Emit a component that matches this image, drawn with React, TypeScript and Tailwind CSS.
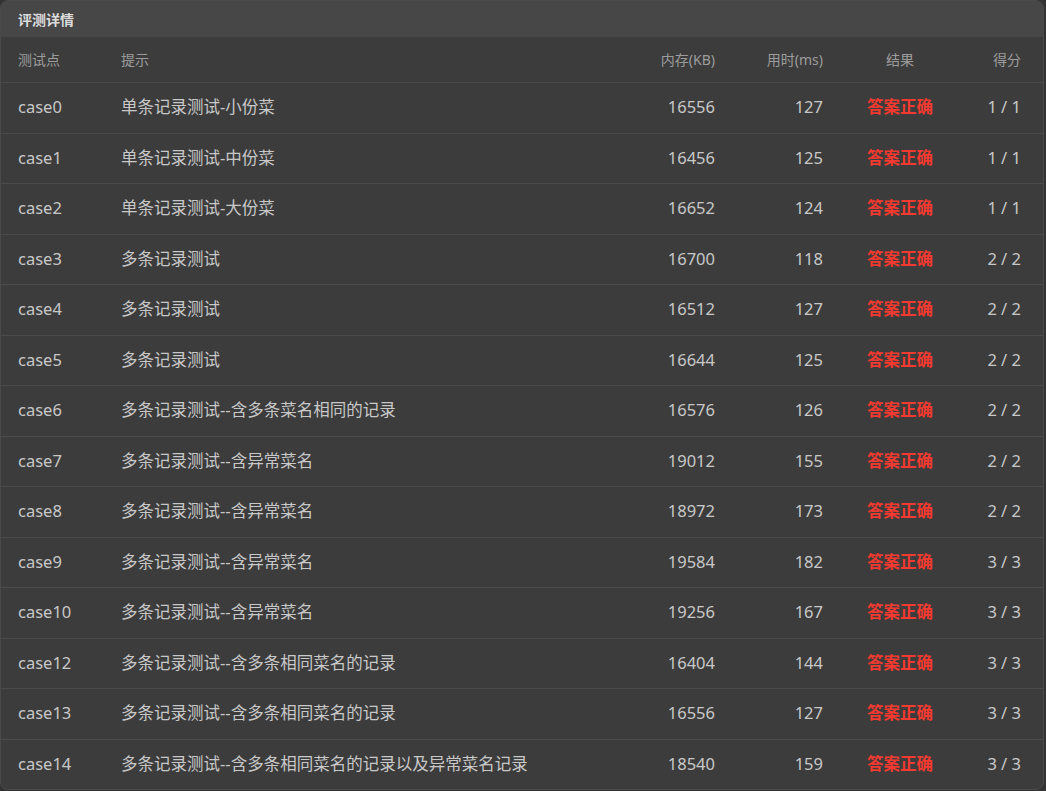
const rows = [
  { id: "case0", hint: "单条记录测试-小份菜", mem: 16556, time: 127, score: "1 / 1" },
  { id: "case1", hint: "单条记录测试-中份菜", mem: 16456, time: 125, score: "1 / 1" },
  { id: "case2", hint: "单条记录测试-大份菜", mem: 16652, time: 124, score: "1 / 1" },
  { id: "case3", hint: "多条记录测试", mem: 16700, time: 118, score: "2 / 2" },
  { id: "case4", hint: "多条记录测试", mem: 16512, time: 127, score: "2 / 2" },
  { id: "case5", hint: "多条记录测试", mem: 16644, time: 125, score: "2 / 2" },
  { id: "case6", hint: "多条记录测试--含多条菜名相同的记录", mem: 16576, time: 126, score: "2 / 2" },
  { id: "case7", hint: "多条记录测试--含异常菜名", mem: 19012, time: 155, score: "2 / 2" },
  { id: "case8", hint: "多条记录测试--含异常菜名", mem: 18972, time: 173, score: "2 / 2" },
  { id: "case9", hint: "多条记录测试--含异常菜名", mem: 19584, time: 182, score: "3 / 3" },
  { id: "case10", hint: "多条记录测试--含异常菜名", mem: 19256, time: 167, score: "3 / 3" },
  { id: "case12", hint: "多条记录测试--含多条相同菜名的记录", mem: 16404, time: 144, score: "3 / 3" },
  { id: "case13", hint: "多条记录测试--含多条相同菜名的记录", mem: 16556, time: 127, score: "3 / 3" },
  { id: "case14", hint: "多条记录测试--含多条相同菜名的记录以及异常菜名记录", mem: 18540, time: 159, score: "3 / 3" },
];

const App = () => {
  return (
    <div className="w-[1046px] h-[791px] bg-[#333333] font-['Noto_Sans','Noto_Sans_CJK_SC',sans-serif] overflow-hidden">
      <div className="w-[1044px] h-[790px] rounded-lg border border-[#4a4a4a] bg-[#3c3c3c] overflow-hidden">
        {/* title bar */}
        <div className="h-[36px] bg-[#474747] flex items-center px-[17px] text-[14px] font-bold text-[#dcdcdc]">
          评测详情
        </div>

        {/* table head */}
        <div className="h-[46px] flex items-center text-[14px] text-[#9c9c9c] border-b border-[#4b4b4b]">
          <div className="w-[120px] pl-[17px]">测试点</div>
          <div className="flex-1">提示</div>
          <div className="w-[130px] text-right">内存(KB)</div>
          <div className="w-[108px] text-right">用时(ms)</div>
          <div className="w-[24px]" />
          <div className="w-[106px] text-center">结果</div>
          <div className="w-[68px] text-right">得分</div>
          <div className="w-[22px]" />
        </div>

        {/* rows */}
        {rows.map((r) => (
          <div
            key={r.id}
            className="h-[50.5px] flex items-center text-[16.5px] text-[#c8c8c8] border-b border-[#4b4b4b] last:border-b-0"
          >
            <div className="w-[120px] pl-[17px]">{r.id}</div>
            <div className="flex-1">{r.hint}</div>
            <div className="w-[130px] text-right">{r.mem}</div>
            <div className="w-[108px] text-right">{r.time}</div>
            <div className="w-[24px]" />
            <div className="w-[106px] text-center font-bold text-[#f23a30]">答案正确</div>
            <div className="w-[68px] text-right">{r.score}</div>
            <div className="w-[22px]" />
          </div>
        ))}
      </div>
    </div>
  );
};

export default App;
